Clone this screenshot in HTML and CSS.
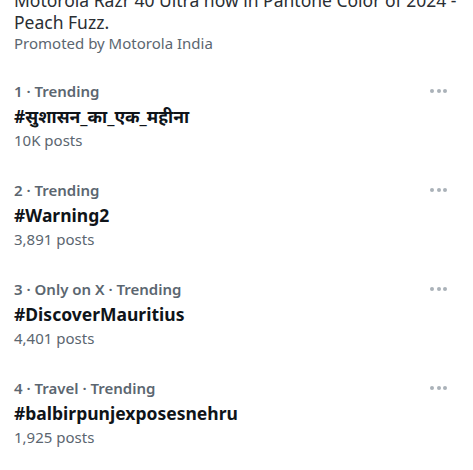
FILE: index.html
```html
<!DOCTYPE html>
<html lang="en">
  <head>
    <meta charset="UTF-8">
    <meta name="viewport" content="width=device-width, initial-scale=1.0">
    <title>Trending</title>
    <link rel="stylesheet" href="styles.css">
  </head>
<body>
  <div class="ad">
    <p class="ad-text">Motorola Razr 40 Ultra now in Pantone Color of 2024 -<br>Peach Fuzz.</p>
    <p class="promoted">Promoted by Motorola India</p>
  </div>

  <div class="trend">
    <div class="trend-info">
      <span class="meta">1 · Trending</span>
      <span class="tag">#सुशासन_का_एक_महीना</span>
      <span class="count">10K posts</span>
    </div>
    <span class="more"><i></i><i></i><i></i></span>
  </div>

  <div class="trend">
    <div class="trend-info">
      <span class="meta">2 · Trending</span>
      <span class="tag">#Warning2</span>
      <span class="count">3,891 posts</span>
    </div>
    <span class="more"><i></i><i></i><i></i></span>
  </div>

  <div class="trend">
    <div class="trend-info">
      <span class="meta">3 · Only on X · Trending</span>
      <span class="tag">#DiscoverMauritius</span>
      <span class="count">4,401 posts</span>
    </div>
    <span class="more"><i></i><i></i><i></i></span>
  </div>

  <div class="trend">
    <div class="trend-info">
      <span class="meta">4 · Travel · Trending</span>
      <span class="tag">#balbirpunjexposesnehru</span>
      <span class="count">1,925 posts</span>
    </div>
    <span class="more"><i></i><i></i><i></i></span>
  </div>
</body>
</html>
```

FILE: styles.css
```css
/* page */
body {
  font-family: "Noto Sans", "Liberation Sans", sans-serif;
  background-color: #ffffff;
  color: #0f1419;
  margin: 0;
  overflow: hidden;
}

/* promoted block at the top, scrolled partly out of view */
.ad {
  margin-top: -11px;
  padding: 0 14px;
}

.ad-text {
  margin: 0;
  font-size: 17.5px;
  line-height: 22px;
  color: #2a2e33;
  white-space: nowrap;
}

.promoted {
  margin: 0;
  font-size: 15px;
  line-height: 20px;
  color: #5b6670;
}

/* trend rows */
.trend {
  display: flex;
  justify-content: space-between;
  align-items: flex-start;
  padding: 0 26px 0 14px;
  margin-top: 27px;
  height: 72px;
}

.trend-info {
  display: flex;
  flex-direction: column;
}

.meta {
  font-size: 15px;
  font-weight: 600;
  color: #5b6670;
  line-height: 22px;
}

.tag {
  font-size: 17.5px;
  font-weight: 700;
  line-height: 26px;
  margin-top: 1px;
  color: #0f1419;
}

.count {
  font-size: 15px;
  color: #5b6670;
  line-height: 23px;
}

.more {
  display: flex;
  gap: 2.5px;
  padding-top: 9px;
}

.more i {
  width: 4px;
  height: 4px;
  border-radius: 50%;
  background-color: #aab2b9;
}
```
